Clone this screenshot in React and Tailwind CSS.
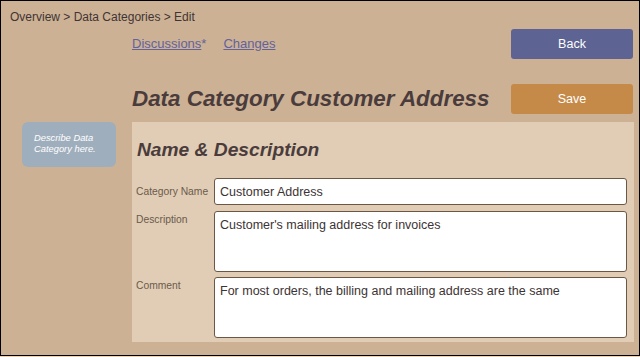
export default function App() {
    const font = { fontFamily: '"Liberation Sans", Arial, sans-serif' };

    return (
        <div className="w-[640px] h-[357px] bg-[#ecd3b6]" style={font}>
            <div className="w-[640px] h-[356px] border border-black bg-[#cdb194] pt-[9px]">
                {/* Breadcrumb */}
                <div className="pl-[9px] text-[12px] leading-[14px] text-[#3f3535]">
                    Overview &gt; Data Categories &gt; Edit
                </div>

                {/* Links + Back */}
                <div className="mt-[5px] ml-[131px] mr-[6px] flex items-start justify-between">
                    <div className="pt-[7px] flex gap-[17px] text-[13px] leading-[15px] text-[#62629c]">
                        <span>
                            <a href="#" className="underline">Discussions</a>*
                        </span>
                        <a href="#" className="underline">Changes</a>
                    </div>
                    <button className="w-[122px] h-[30px] rounded-[3px] bg-[#5d6393] text-white text-[12.5px]">
                        Back
                    </button>
                </div>

                {/* Title + Save */}
                <div className="mt-[25px] ml-[131px] mr-[6px] flex items-start justify-between">
                    <h1 className="mt-[1px] text-[22.4px] leading-[28px] font-bold italic text-[#4a3c3c]">
                        Data Category Customer Address
                    </h1>
                    <button className="w-[122px] h-[30px] rounded-[3px] bg-[#c68a48] text-white text-[12.5px]">
                        Save
                    </button>
                </div>

                {/* Body */}
                <div className="mt-[8px] flex">
                    <div className="ml-[21px] w-[94px] h-[45px] rounded-[6px] bg-[#9faebc] pt-[11px] pl-[12px] text-[9.33px] leading-[11px] italic text-white">
                        Describe Data<br />Category here.
                    </div>
                    <div className="ml-[16px] w-[502px] h-[220px] bg-[#e1cdb5] pt-[16px] pl-[4px] pr-[7px]">
                        <h2 className="pl-[1px] text-[19.2px] leading-[24px] font-bold italic text-[#4a3c3c]">
                            Name &amp; Description
                        </h2>

                        <div className="mt-[16px] flex flex-col gap-[6px]">
                            <div className="flex items-center">
                                <label className="w-[78px] text-[10.3px] leading-[12px] text-[#6b5a4c]">Category Name</label>
                                <input
                                    readOnly
                                    value="Customer Address"
                                    className="w-[413px] h-[27px] rounded-[3px] border border-[#6b5844] bg-white px-[5px] text-[12.5px] text-[#3d3333] outline-none"
                                />
                            </div>
                            <div className="flex items-start">
                                <label className="mt-[3px] w-[78px] text-[10.3px] leading-[12px] text-[#6b5a4c]">Description</label>
                                <textarea
                                    readOnly
                                    value="Customer's mailing address for invoices"
                                    className="w-[413px] h-[61px] resize-none rounded-[3px] border border-[#6b5844] bg-white px-[5px] pt-[6px] text-[12.5px] leading-[15px] text-[#3d3333] outline-none"
                                />
                            </div>
                            <div className="-mt-[1px] flex items-start">
                                <label className="mt-[3px] w-[78px] text-[10.3px] leading-[12px] text-[#6b5a4c]">Comment</label>
                                <textarea
                                    readOnly
                                    value="For most orders, the billing and mailing address are the same"
                                    className="w-[413px] h-[61px] resize-none rounded-[3px] border border-[#6b5844] bg-white px-[5px] pt-[6px] text-[12.5px] leading-[15px] text-[#3d3333] outline-none"
                                />
                            </div>
                        </div>
                    </div>
                </div>
            </div>
        </div>
    );
}
